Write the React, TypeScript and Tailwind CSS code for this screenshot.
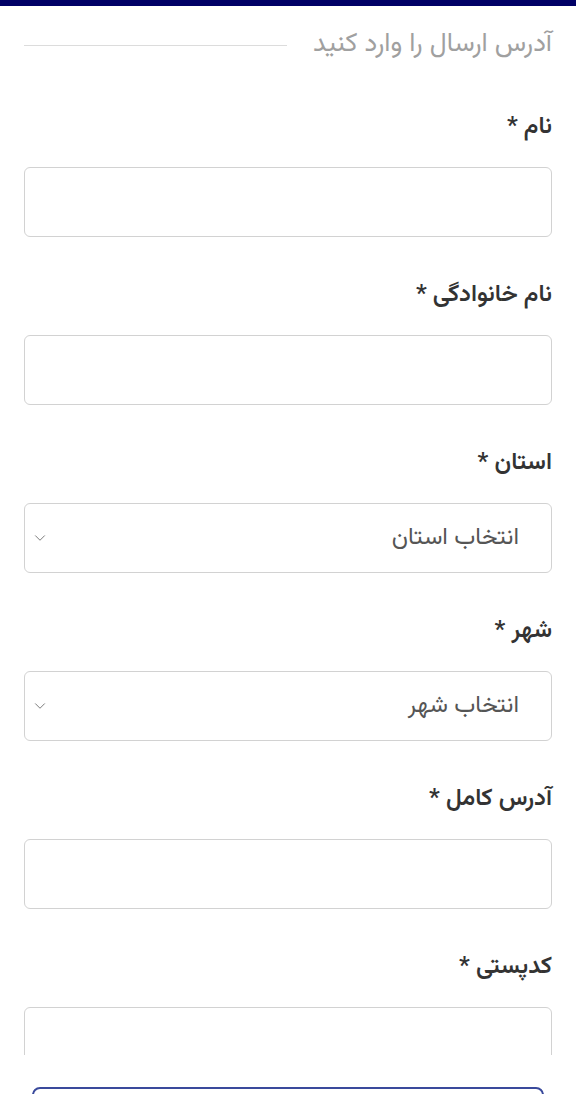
import { ChevronDown } from "lucide-react";

const fields = [
  { label: "نام *", type: "input" },
  { label: "نام خانوادگی *", type: "input" },
  { label: "استان *", type: "select", placeholder: "انتخاب استان" },
  { label: "شهر *", type: "select", placeholder: "انتخاب شهر" },
  { label: "آدرس کامل *", type: "input" },
  { label: "کدپستی *", type: "input" },
];

function Field({ label, type, placeholder }: { label: string; type: string; placeholder?: string }) {
  return (
    <div className="flex flex-col gap-[25px]">
      <label className="text-[24px] leading-[30px] font-semibold text-[#333]">{label}</label>

      {type === "select" ? (
        <div className="flex h-[70px] items-center justify-between rounded-[6px] border border-[#d2d2d2] pr-8 pl-[6px]">
          <span className="text-[24px] text-[#555]">{placeholder}</span>
          <ChevronDown className="h-[18px] w-[18px] text-[#777]" strokeWidth={1.3} />
        </div>
      ) : (
        <input className="h-[70px] w-full shrink-0 rounded-[6px] border border-[#d2d2d2] bg-white px-4 outline-none" />
      )}
    </div>
  );
}

export default function App() {
  return (
    <div
      dir="rtl"
      className="flex h-[1094px] flex-col overflow-hidden bg-white"
      style={{ fontFamily: '"Vazirmatn", "DejaVu Sans", sans-serif' }}
    >
      <div className="h-[6px] shrink-0 bg-[#000066]" />

      <div className="h-[1049px] shrink-0 overflow-hidden px-6 pt-6">
        <div className="flex items-center gap-[26px]">
          <h2 className="text-[26.5px] leading-[30px] whitespace-nowrap text-[#a0a0a0]">
            آدرس ارسال را وارد کنید
          </h2>
          <div className="h-px flex-1 bg-[#dcdcdc]" />
        </div>

        <div className="mt-[52px] flex flex-col gap-[43px]">
          {fields.map((f) => (
            <Field key={f.label} {...f} />
          ))}
        </div>
      </div>

      <div className="shrink-0 px-8 pt-8">
        <button
          type="button"
          className="h-[50px] w-full rounded-[8px] border-2 border-[#3a4a9c] bg-white"
        />
      </div>
    </div>
  );
}
